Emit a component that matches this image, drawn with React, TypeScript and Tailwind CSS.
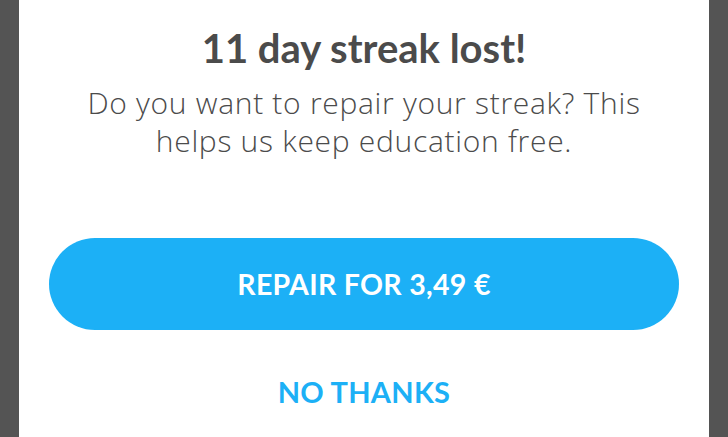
export default function App() {
  return (
    <div className="w-[728px] h-[437px] bg-[#545454] pl-[19px] pr-[19px] overflow-hidden">
      <div className="h-full bg-white flex flex-col items-center font-['Lato','Liberation_Sans',sans-serif]">
        <h1 className="mt-[26px] text-[40px] leading-[44px] font-bold text-[#4b4b4b]">
          11 day streak lost!
        </h1>
        <p className="mt-[14px] text-[30px] leading-[38px] tracking-[0.7px] font-light text-[#4b4b4b] text-center font-['Open_Sans','Lato',sans-serif]">
          Do you want to repair your streak? This
          <br />
          helps us keep education free.
        </p>
        <button className="mt-[78px] w-[630px] h-[92px] rounded-full bg-[#1cb0f6] text-white text-[28.5px] font-bold tracking-[0.3px]">
          REPAIR FOR 3,49 €
        </button>
        <button className="mt-[40px] text-[29px] font-bold text-[#1cb0f6] tracking-[0.3px]">
          NO THANKS
        </button>
      </div>
    </div>
  )
}
